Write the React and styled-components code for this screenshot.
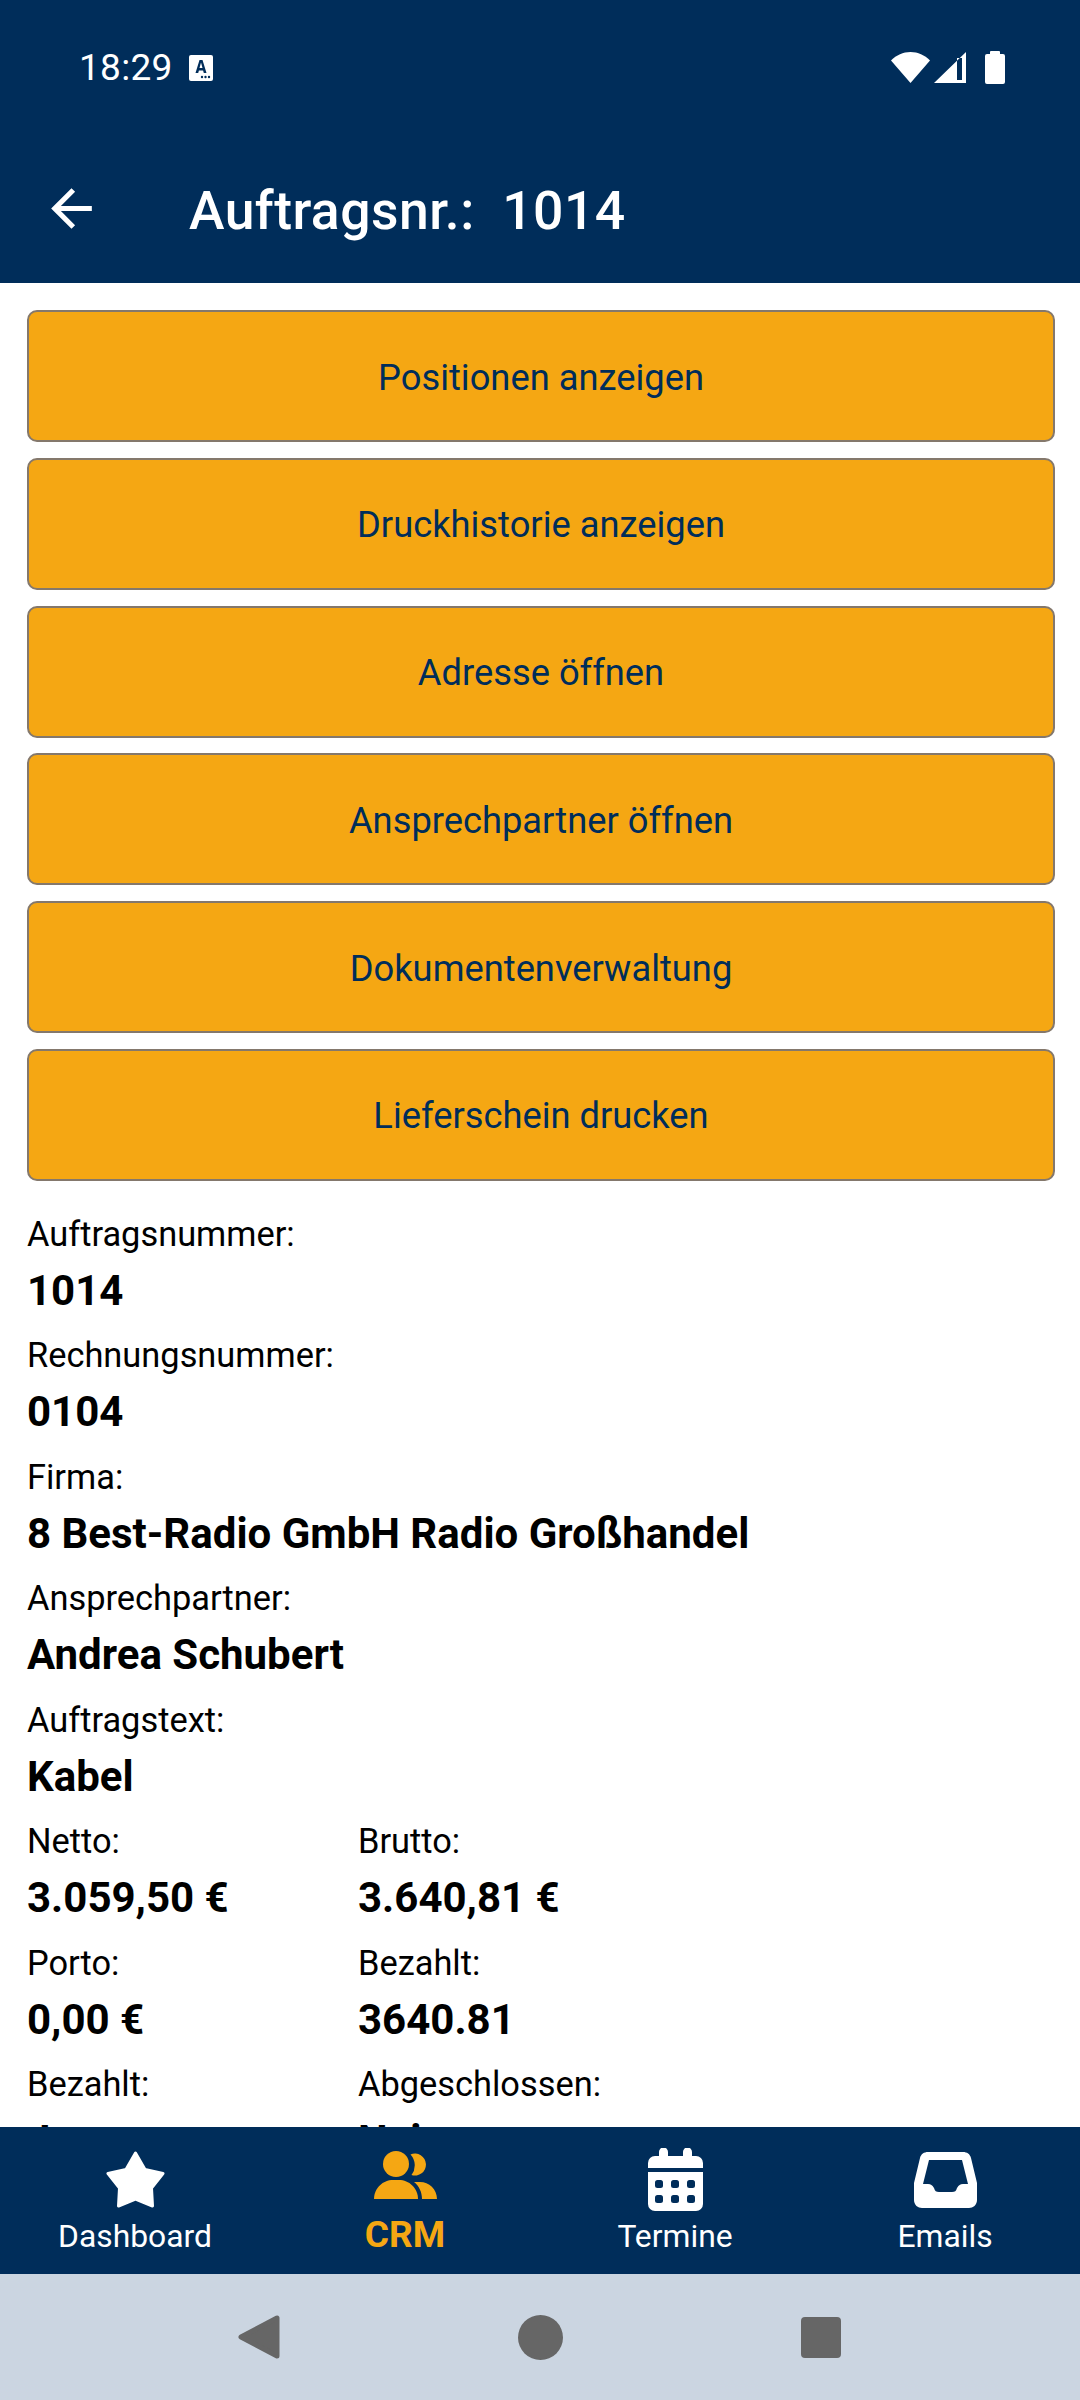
import React from "react";
import styled, { createGlobalStyle } from "styled-components";
import { MdArrowBack } from "react-icons/md";

const GlobalStyle = createGlobalStyle`
  html, body {
    margin: 0;
    padding: 0;
    background: #fff;
    font-family: Roboto, "Liberation Sans", sans-serif;
  }
`;

const navy = "#002d5a";
const orange = "#f5a713";

const Screen = styled.div`
  width: 1080px;
  height: 2400px;
  display: flex;
  flex-direction: column;
  overflow: hidden;
  background: #fff;
`;

const Header = styled.header`
  height: 283px;
  flex: none;
  background: ${navy};
  color: #fff;
  display: flex;
  flex-direction: column;
`;

const StatusBar = styled.div`
  height: 135px;
  display: flex;
  align-items: center;
  justify-content: space-between;
  padding: 0 75px 0 79px;
`;

const StatusLeft = styled.div`
  display: flex;
  align-items: center;
  gap: 16px;
  font-size: 37px;
  letter-spacing: 0.3px;
`;

const StatusRight = styled.div`
  display: flex;
  align-items: center;
  gap: 4px;
`;

const BatterySvg = styled.svg`
  margin-left: 15px;
`;

const Toolbar = styled.div`
  flex: 1;
  display: flex;
  align-items: center;
  padding-left: 41px;
`;

const BackButton = styled.div`
  width: 148px;
  display: flex;
  align-items: center;
  margin-top: -2px;
  svg {
    display: block;
  }
`;

const Title = styled.h1`
  margin: 3px 0 0;
  font-size: 53.5px;
  font-weight: 500;
  letter-spacing: 0.45px;
  white-space: pre;
`;

const Content = styled.main`
  flex: 1 1 0;
  min-height: 0;
  overflow: hidden;
  padding: 27px 25px 0 27px;
`;

const Buttons = styled.div`
  display: flex;
  flex-direction: column;
  gap: 15.8px;
  margin-bottom: 31px;
`;

const ActionButton = styled.button`
  height: 132px;
  flex: none;
  box-sizing: border-box;
  background: ${orange};
  border: 2px solid #84786c;
  border-radius: 10px;
  color: ${navy};
  font-family: Roboto, sans-serif;
  font-size: 36.3px;
  padding: 2px 0 0;
`;

const Fields = styled.div`
  display: flex;
  flex-direction: column;
`;

const Row = styled.div`
  display: grid;
  grid-template-columns: 331px 1fr;
`;

const Field = styled.div`
  height: 121.5px;
`;

const Label = styled.div`
  font-size: 34.4px;
  line-height: 44px;
  color: #000;
`;

const Value = styled.div`
  font-size: 42px;
  line-height: 56px;
  margin-top: 7px;
  font-weight: 700;
  color: #000;
`;

const TabBar = styled.nav`
  height: 147px;
  flex: none;
  background: ${navy};
  display: grid;
  grid-template-columns: repeat(4, 1fr);
`;

const Tab = styled.div`
  display: flex;
  flex-direction: column;
  align-items: center;
  color: ${(p) => (p.$active ? orange : "#fff")};
`;

const TabIcon = styled.div`
  height: 63px;
  margin-top: 21px;
  display: flex;
  align-items: center;
  justify-content: center;
`;

const TabLabel = styled.span`
  font-size: ${(p) => (p.$active ? "37px" : "31.8px")};
  font-weight: ${(p) => (p.$active ? 700 : 400)};
  line-height: 44px;
  margin-top: ${(p) => (p.$active ? "2px" : "3px")};
`;

const SystemNav = styled.div`
  flex: none;
  height: 126px;
  background: #cbd5e1;
  display: flex;
  align-items: center;
  justify-content: center;
  gap: 238px;
  padding-right: 2px;
`;

const WifiIcon = () => (
  <svg width="39" height="31" viewBox="0 0 39 31">
    <path d="M0 8.500C5.500 3 12 0 19.500 0S33.500 3 39 8.500L19.500 31Z" fill="#fff" />
  </svg>
);

const SignalIcon = () => (
  <svg width="32" height="31" viewBox="0 0 32 31">
    <path fillRule="evenodd" d="M32 0V31H0ZM23 6V28H28V6Z" fill="#fff" />
  </svg>
);

const BatteryIcon = () => (
  <BatterySvg width="20" height="33" viewBox="0 0 20 33">
    <path d="M5 1a1 1 0 0 1 1-1h8a1 1 0 0 1 1 1v2h3a2 2 0 0 1 2 2v26a2 2 0 0 1-2 2H2a2 2 0 0 1-2-2V5a2 2 0 0 1 2-2h3Z" fill="#fff" />
  </BatterySvg>
);

const KeyboardBadge = () => (
  <svg width="24" height="26" viewBox="0 0 24 26">
    <rect width="24" height="26" rx="2" fill="#fff" />
    <path d="M6.500 18 10.500 5h3l4 13h-2.700l-.7-2.600h-4.200L9.200 18ZM10.500 13h3L12 7.500Z" fill={navy} fillRule="evenodd" />
    <circle cx="13" cy="22" r="1.200" fill={navy} />
    <circle cx="16.500" cy="22" r="1.200" fill={navy} />
    <circle cx="20" cy="22" r="1.200" fill={navy} />
  </svg>
);

const StarIcon = () => (
  <svg width="59" height="57" viewBox="0 0 59 57" fill="currentColor">
    <path
      d="M29.500 2L39 18.500L57 22.500L45.500 37L46.500 55L29.500 48L12.500 55L13.500 37L2 22.500L20 18.500Z"
      stroke="currentColor"
      strokeWidth="3"
      strokeLinejoin="round"
    />
  </svg>
);

const UsersIcon = () => (
  <svg width="63" height="58" viewBox="0 0 63 58" fill="currentColor">
    <path d="M36.500 3.500A11 11 0 1 1 37.500 24A16 16 0 0 0 36.500 3.500Z" />
    <circle cx="22" cy="13" r="13" />
    <path d="M0 48C0 37 9 29 19 29H25C35 29 44 37 44 48Z" />
    <path d="M40 31H46C55 31 63 38 63 48H48C48 41 45 35 40 31Z" />
  </svg>
);

const CalendarIcon = () => (
  <svg width="55" height="63" viewBox="0 0 55 63" fill="currentColor">
    <path
      fillRule="evenodd"
      d="M11 4a4.500 4.500 0 0 1 9 0V8H35V4a4.500 4.500 0 0 1 9 0V8H48a7 7 0 0 1 7 7V20H0V15a7 7 0 0 1 7-7H11ZM0 24H55V56a7 7 0 0 1-7 7H7a7 7 0 0 1-7-7Z"
    />
    <g fill={navy}>
      <rect x="7" y="32" width="8" height="8" rx="2.500" />
      <rect x="23" y="32" width="8" height="8" rx="2.500" />
      <rect x="39" y="32" width="8" height="8" rx="2.500" />
      <rect x="7" y="47" width="8" height="8" rx="2.500" />
      <rect x="23" y="47" width="8" height="8" rx="2.500" />
      <rect x="39" y="47" width="8" height="8" rx="2.500" />
    </g>
  </svg>
);

const InboxIcon = () => (
  <svg width="63" height="56" viewBox="0 0 63 56" fill="currentColor">
    <path
      fillRule="evenodd"
      d="M14 0H49C53 0 56 2 57 6L63 31V48C63 53 59 56 55 56H8C4 56 0 53 0 48V31L6 6C7 2 10 0 14 0ZM15 8L9 32H14C17 32 18 33 20 36C21 39 22 40 25 40H38C41 40 42 39 43 36C45 33 46 32 49 32H54L48 8Z"
    />
  </svg>
);

const NavBack = () => (
  <svg width="42" height="44" viewBox="0 0 42 44">
    <path d="M39 3V41L3 22Z" fill="#666" stroke="#666" strokeWidth="5" strokeLinejoin="round" />
  </svg>
);

const NavHome = () => (
  <svg width="45" height="45" viewBox="0 0 45 45">
    <circle cx="22.500" cy="22.500" r="22.500" fill="#666" />
  </svg>
);

const NavRecent = () => (
  <svg width="40" height="41" viewBox="0 0 40 41">
    <rect width="40" height="41" rx="4" fill="#666" />
  </svg>
);

const actions = [
  "Positionen anzeigen",
  "Druckhistorie anzeigen",
  "Adresse öffnen",
  "Ansprechpartner öffnen",
  "Dokumentenverwaltung",
  "Lieferschein drucken",
];

const singleFields = [
  ["Auftragsnummer:", "1014"],
  ["Rechnungsnummer:", "0104"],
  ["Firma:", "8 Best-Radio GmbH Radio Großhandel"],
  ["Ansprechpartner:", "Andrea Schubert"],
  ["Auftragstext:", "Kabel"],
];

const pairedFields = [
  [["Netto:", "3.059,50 €"], ["Brutto:", "3.640,81 €"]],
  [["Porto:", "0,00 €"], ["Bezahlt:", "3640.81"]],
  [["Bezahlt:", "Ja"], ["Abgeschlossen:", "Nein"]],
];

const tabs = [
  { label: "Dashboard", icon: <StarIcon /> },
  { label: "CRM", icon: <UsersIcon />, active: true },
  { label: "Termine", icon: <CalendarIcon /> },
  { label: "Emails", icon: <InboxIcon /> },
];

const App = () => {
  return (
    <Screen>
      <GlobalStyle />
      <Header>
        <StatusBar>
          <StatusLeft>
            18:29
            <KeyboardBadge />
          </StatusLeft>
          <StatusRight>
            <WifiIcon />
            <SignalIcon />
            <BatteryIcon />
          </StatusRight>
        </StatusBar>
        <Toolbar>
          <BackButton>
            <MdArrowBack size={61} />
          </BackButton>
          <Title>{"Auftragsnr.:  1014"}</Title>
        </Toolbar>
      </Header>
      <Content>
        <Buttons>
          {actions.map((text) => (
            <ActionButton key={text}>{text}</ActionButton>
          ))}
        </Buttons>
        <Fields>
          {singleFields.map(([label, value]) => (
            <Field key={label}>
              <Label>{label}</Label>
              <Value>{value}</Value>
            </Field>
          ))}
          {pairedFields.map((row) => (
            <Row key={row[1][0]}>
              {row.map(([label, value]) => (
                <Field key={label}>
                  <Label>{label}</Label>
                  <Value>{value}</Value>
                </Field>
              ))}
            </Row>
          ))}
        </Fields>
      </Content>
      <TabBar>
        {tabs.map((tab) => (
          <Tab key={tab.label} $active={tab.active}>
            <TabIcon>{tab.icon}</TabIcon>
            <TabLabel $active={tab.active}>{tab.label}</TabLabel>
          </Tab>
        ))}
      </TabBar>
      <SystemNav>
        <NavBack />
        <NavHome />
        <NavRecent />
      </SystemNav>
    </Screen>
  );
};

export default App;
